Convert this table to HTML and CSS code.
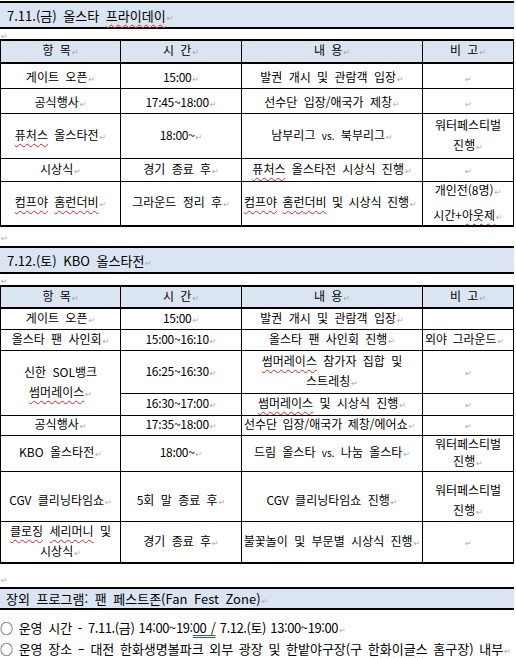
FILE: index.html
```html
<!DOCTYPE html>
<html lang="ko">
<head>
<meta charset="utf-8">
<link rel="stylesheet" href="styles.css">
</head>
<body>
<div class="page">
  <div class="sec sec1"><span>7.11.(금) 올스타 <span class="sp">프라이데이</span><i class="pm">↵</i></span></div>
  <div class="blank b1"><i class="pm">↵</i></div>

  <div class="tbl t1">
    <div class="c hd"><span>항 목<i class="pm">↵</i></span></div>
    <div class="c hd"><span>시 간<i class="pm">↵</i></span></div>
    <div class="c hd"><span>내 용<i class="pm">↵</i></span></div>
    <div class="c hd"><span>비 고<i class="pm">↵</i></span></div>

    <div class="c low"><span>게이트 오픈<i class="pm">↵</i></span></div>
    <div class="c low n"><span>15:00<i class="pm">↵</i></span></div>
    <div class="c low"><span>발권 개시 및 관람객 입장<i class="pm">↵</i></span></div>
    <div class="c low"><span><i class="pm">↵</i></span></div>

    <div class="c low"><span>공식행사<i class="pm">↵</i></span></div>
    <div class="c low n"><span>17:45~18:00<i class="pm">↵</i></span></div>
    <div class="c low"><span>선수단 입장/애국가 제창<i class="pm">↵</i></span></div>
    <div class="c low"><span><i class="pm">↵</i></span></div>

    <div class="c"><span><span class="sp">퓨처스</span> 올스타전<i class="pm">↵</i></span></div>
    <div class="c n"><span>18:00~<i class="pm">↵</i></span></div>
    <div class="c"><span>남부리그 <span class="vs">vs.</span> 북부리그<i class="pm">↵</i></span></div>
    <div class="c ml"><span>워터페스티벌<br>진행<i class="pm">↵</i></span></div>

    <div class="c"><span>시상식<i class="pm">↵</i></span></div>
    <div class="c"><span>경기 종료 후<i class="pm">↵</i></span></div>
    <div class="c"><span><span class="sp">퓨처스</span> 올스타전 시상식 진행<i class="pm">↵</i></span></div>
    <div class="c"><span><i class="pm">↵</i></span></div>

    <div class="c"><span><span class="sp">컴프야</span> <span class="sp">홈런더비</span><i class="pm">↵</i></span></div>
    <div class="c"><span>그라운드 정리 후<i class="pm">↵</i></span></div>
    <div class="c ov"><span><span class="sp">컴프야</span> <span class="sp">홈런더비</span> 및 시상식 진행<i class="pm">↵</i></span></div>
    <div class="c ml ml22"><span>개인전(8명)<i class="pm">↵</i><br>시간+<span class="sp">아웃제</span><i class="pm">↵</i></span></div>
  </div>

  <div class="blank b2"><i class="pm">↵</i></div>
  <div class="sec sec2"><span>7.12.(토) KBO 올스타전<i class="pm">↵</i></span></div>
  <div class="blank b3"><i class="pm">↵</i></div>

  <div class="tbl t2">
    <div class="c hd"><span>항 목<i class="pm">↵</i></span></div>
    <div class="c hd"><span>시 간<i class="pm">↵</i></span></div>
    <div class="c hd"><span>내 용<i class="pm">↵</i></span></div>
    <div class="c hd"><span>비 고<i class="pm">↵</i></span></div>

    <div class="c"><span>게이트 오픈<i class="pm">↵</i></span></div>
    <div class="c n"><span>15:00<i class="pm">↵</i></span></div>
    <div class="c"><span>발권 개시 및 관람객 입장<i class="pm">↵</i></span></div>
    <div class="c"></div>

    <div class="c"><span>올스타 팬 사인회<i class="pm">↵</i></span></div>
    <div class="c n"><span>15:00~16:10<i class="pm">↵</i></span></div>
    <div class="c"><span>올스타 팬 사인회 진행<i class="pm">↵</i></span></div>
    <div class="c ov"><span>외야 그라운드<i class="pm">↵</i></span></div>

    <div class="c ml span2"><span>신한 SOL뱅크<br><span class="sp">썸머레이스</span><i class="pm">↵</i></span></div>
    <div class="c n"><span>16:25~16:30<i class="pm">↵</i></span></div>
    <div class="c ml"><span><span class="sp">썸머레이스</span> 참가자 집합 및<br>스트레칭<i class="pm">↵</i></span></div>
    <div class="c"><span><i class="pm">↵</i></span></div>

    <div class="c n"><span>16:30~17:00<i class="pm">↵</i></span></div>
    <div class="c"><span><span class="sp">썸머레이스</span> 및 시상식 진행<i class="pm">↵</i></span></div>
    <div class="c"><span><i class="pm">↵</i></span></div>

    <div class="c"><span>공식행사<i class="pm">↵</i></span></div>
    <div class="c n"><span>17:35~18:00<i class="pm">↵</i></span></div>
    <div class="c ov"><span>선수단 입장/애국가 제창/에어쇼<i class="pm">↵</i></span></div>
    <div class="c"><span><i class="pm">↵</i></span></div>

    <div class="c"><span>KBO 올스타전<i class="pm">↵</i></span></div>
    <div class="c n"><span>18:00~<i class="pm">↵</i></span></div>
    <div class="c"><span>드림 올스타 <span class="vs">vs.</span> 나눔 올스타<i class="pm">↵</i></span></div>
    <div class="c ml ml17"><span>워터페스티벌<br>진행<i class="pm">↵</i></span></div>

    <div class="c pad"><span>CGV 클리닝타임쇼<i class="pm">↵</i></span></div>
    <div class="c pad"><span>5회 말 종료 후<i class="pm">↵</i></span></div>
    <div class="c pad"><span>CGV 클리닝타임쇼 진행<i class="pm">↵</i></span></div>
    <div class="c pad ml"><span>워터페스티벌<br>진행<i class="pm">↵</i></span></div>

    <div class="c ml"><span><span class="sp">클로징</span> <span class="sp">세리머니</span> 및<br>시상식<i class="pm">↵</i></span></div>
    <div class="c"><span>경기 종료 후<i class="pm">↵</i></span></div>
    <div class="c"><span>불꽃놀이 및 부문별 시상식 진행<i class="pm">↵</i></span></div>
    <div class="c"><span><i class="pm">↵</i></span></div>
  </div>

  <div class="blank b4"><i class="pm">↵</i></div>
  <div class="sec sec3"><span>장외 프로그램: 팬 페스트존(Fan Fest Zone)<i class="pm">↵</i></span></div>
  <p class="line l1">○ 운영 시간 - <span class="num">7.11.(금) 14:00~19:<span class="gr">00 /</span> 7.12.(토) 13:00~19:00</span><i class="pm">↵</i></p>
  <p class="line">○ 운영 장소 – 대전 한화생명볼파크 외부 광장 및 한밭야구장(구 <span class="sp">한화이글스</span> 홈구장) 내부<i class="pm">↵</i></p>
</div>
</body>
</html>
```

FILE: styles.css
```css
html, body {
  margin: 0;
  padding: 0;
  background: #ffffff;
}

.page {
  width: 516px;
  height: 658px;
  overflow: hidden;
  font-family: "Noto Sans CJK KR", "Noto Sans", sans-serif;
  color: #000;
  font-size: 12px;
  word-spacing: 3px;
}

.pm {
  font-style: normal;
  font-family: "DejaVu Sans", sans-serif;
  font-size: 8px;
  color: #a8a8a8;
  word-spacing: 0;
  letter-spacing: 0;
  margin-left: 1px;
}

.sp {
  text-decoration: underline wavy #e02020;
  text-decoration-thickness: 1px;
  text-underline-offset: 3px;
  text-decoration-skip-ink: none;
}

.gr {
  text-decoration: underline double #3056b8;
  text-decoration-thickness: 1px;
  text-underline-offset: 2px;
}

.vs {
  font-size: 10px;
}

/* section headers */
.sec {
  width: 514px;
  background: #dbe5f1;
  border-top: 2px solid #000;
  border-bottom: 2px solid #000;
  box-sizing: border-box;
  padding-left: 7px;
  font-size: 13px;
  white-space: nowrap;
  display: flex;
  align-items: center;
}

.sec1 {
  margin-top: 1px;
  height: 28px;
}

.sec2 {
  height: 28px;
}

.sec3 {
  height: 23px;
  padding-left: 6px;
}

/* empty paragraphs */
.blank {
  line-height: 10px;
  box-sizing: border-box;
}

.b1 { height: 10px; }
.b2 { height: 19px; padding-top: 4px; }
.b3 { height: 11px; }
.b4 { height: 23px; padding-top: 9px; }

/* tables */
.tbl {
  display: grid;
  grid-template-columns: 120px 121px 181px 91px;
  width: 514px;
  box-sizing: border-box;
  border-top: 2px solid #000;
  border-left: 1px solid #000;
  border-bottom: 1px solid #000;
}

.t1 {
  grid-template-rows: 23px 25px 25px 45px 23px 44px;
}

.t2 {
  grid-template-rows: 22px 21px 21px 43px 22px 20px 36px 50px 41px;
}

.c {
  box-sizing: border-box;
  border-right: 1px solid #000;
  border-bottom: 1px solid #000;
  display: flex;
  align-items: center;
  justify-content: center;
  text-align: center;
  white-space: nowrap;
  overflow: hidden;
  line-height: 16px;
  padding: 0 1px;
}

.hd {
  background: #dbe5f1;
  border-bottom-width: 2px;
}

.span2 {
  grid-row: span 2;
}

.ml {
  line-height: 20px;
}

.ml22 {
  line-height: 22px;
}

.ml17 {
  line-height: 17px;
}

.n {
  letter-spacing: -0.3px;
  word-spacing: 0;
}

.ov {
  justify-content: flex-start;
  padding-left: 2px;
  word-spacing: 2px;
}

.low {
  padding-top: 5px;
}

.pad {
  padding-top: 10px;
}

/* bottom paragraphs */
.line {
  margin: 0;
  line-height: 17.5px;
  font-size: 13px;
  word-spacing: 2px;
  white-space: nowrap;
}

.line .num {
  letter-spacing: -0.4px;
  word-spacing: 1px;
}

.l1 {
  margin-top: 9px;
}
```
